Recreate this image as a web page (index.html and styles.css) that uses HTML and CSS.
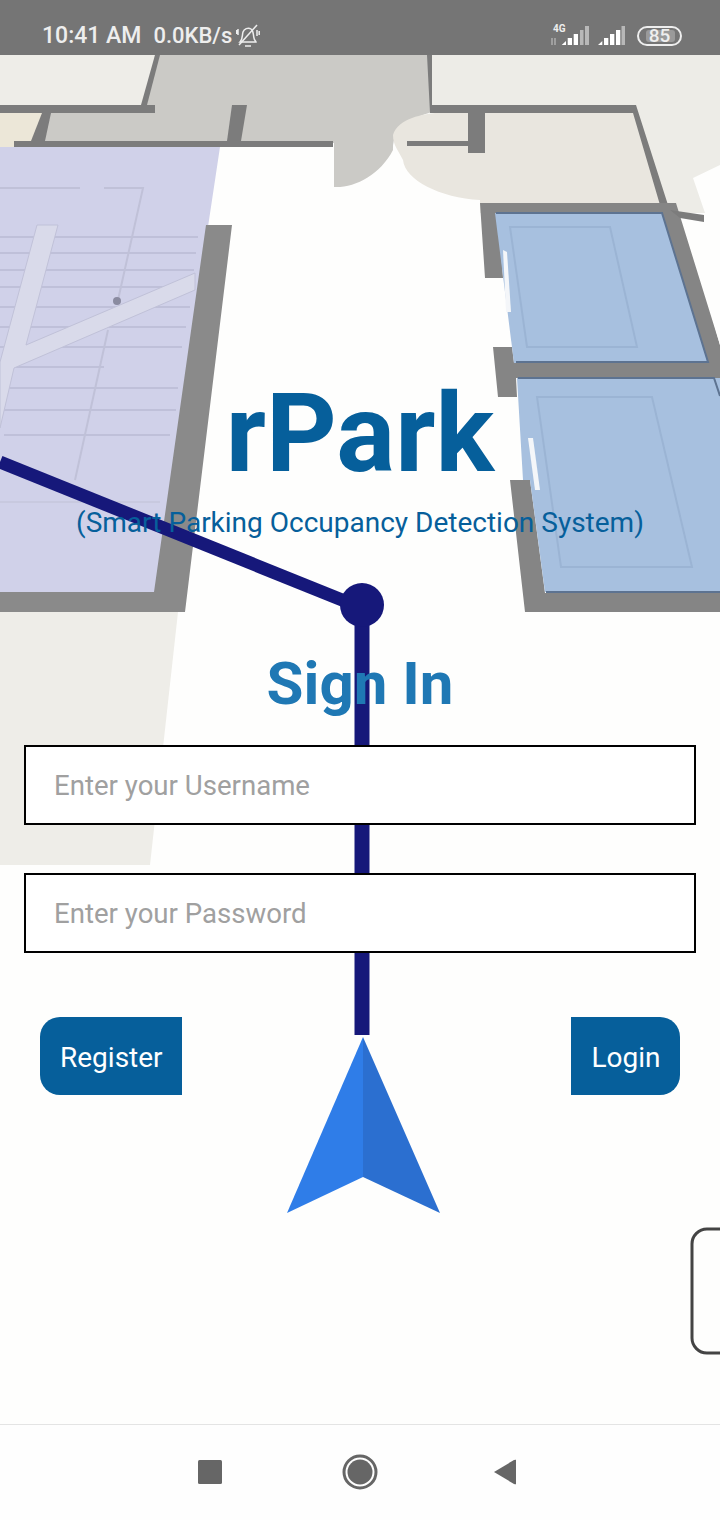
FILE: index.html
```html
<!DOCTYPE html>
<html>
<head>
    <title>rPark</title>
    <meta name="viewport" content="width=device-width, initial-scale=1">
    <link rel="stylesheet" href="styles.css">
</head>
<body>
    <div class="statusbar">
        <span class="time">10:41 AM</span>
        <span class="speed">0.0KB/s</span>
        <svg class="bell" width="24" height="24" viewBox="0 0 24 24" fill="none" stroke="#eee" stroke-width="1.5">
            <path d="M4 18 C7 15 6 11 7 8 C8 5 12 3 15 5 C18 7 17 11 18 14 C18 16 20 17 20 18 Z"/>
            <path d="M9 22 H15"/>
            <path d="M3 21 L21 1"/>
            <path d="M2 5 V11 M0.500 6 V10 M21 6 V12 M23.200 7 V11"/>
        </svg>
        <div class="status-right">
            <svg class="signal-4g" width="40" height="24" viewBox="0 0 40 24">
                <text x="3" y="8" class="net-label">4G</text>
                <path d="M2 14 V21 M5 14 V21" stroke="#bbb" stroke-width="1.200"/>
                <path d="M11.700 21 L16 17 V21 Z M17.700 21 V14 H22 V21 Z M23.700 21 V10 H28 V21 Z" fill="#fff"/>
                <path d="M30 21 V6 H33.500 V21 Z M35 21 V2 H39 V21 Z" fill="#b8b8b8"/>
            </svg>
            <svg class="signal-sim" width="28" height="24" viewBox="0 0 28 24">
                <path d="M0 21 L4.300 17 V21 Z M6 21 V14 H10.300 V21 Z M12 21 V10 H16.300 V21 Z M18 21 V6 H22.300 V21 Z" fill="#fff"/>
                <path d="M23.500 21 V2 H27 V21 Z" fill="#b8b8b8"/>
            </svg>
            <div class="battery"><span class="battery-fill"></span><span class="battery-num">85</span></div>
        </div>
    </div>

    <div class="main">
        <svg class="map" width="720" height="1369" viewBox="0 55 720 1369">
            <!-- floor zones -->
            <path d="M430 55 H720 V165 L693 178 L705 213 H480 V113 H430 Z" fill="#edece7"/>
            <path d="M0 55 H158 L143 105 H0 Z" fill="#eeede8"/>
            <path d="M155 55 H432 V112 C410 118 392 130 393 150 C380 175 355 188 334 187 V143 H40 L50 113 H143 Z" fill="#cbcac6"/>
            <path d="M0 113 H44 L36 143 L0 165 Z" fill="#ece7d8"/>
            <path d="M393 135 C398 118 425 114 435 113 H636 L662 205 H480 V200 C440 198 405 180 403 160 C398 150 393 145 393 135 Z" fill="#e9e6df"/>
            <path d="M0 612 H178 L150 865 H0 Z" fill="#eeede8"/>
            <path d="M0 147 H220 L206 240 L160 592 H0 Z" fill="#d0d1e9"/>

            <!-- stairs -->
            <g stroke="#bfc0d9" stroke-width="2" fill="none">
                <path d="M0 237 H198 M0 253 H196 M0 270 H194 M0 287 H192 M0 307 H190 M0 327 H186 M0 347 H182 M13 367 H104 M0 388 H178 M4 410 H176 M4 435 H170"/>
                <path d="M0 502 H160" stroke="#c8c9df"/>
                <path d="M0 188 H80 M104 188 H143 L118 300" stroke="#c0c1d8"/>
                <path d="M108 330 L75 480" stroke="#c0c1d8"/>
            </g>
            <path d="M37 225 H58 L26 345 L195 273 V290 L14 368 L0 428 V362 Z" fill="#d9daea" stroke="#c0c1d8" stroke-width="1"/>
            <circle cx="117" cy="301" r="4" fill="#8a8ba0"/>

            <!-- walls -->
            <g fill="#7c7c7c">
                <path d="M0 105 H155 V113 H0 Z"/>
                <path d="M155 55 H160 L147 105 H141 Z"/>
                <path d="M42 113 H51 L45 141 H31 Z"/>
                <path d="M232 105 H247 L241 141 H227 Z"/>
                <path d="M14 141 H333 V147 H14 Z"/>
                <path d="M206 225 H232 L185 612 H0 V592 H154 Z" fill="#8a8a8a"/>
                <path d="M427 55 H432 V105 H636 L668 205 H660 L633 113 H485 V153 H468 V146 H407 V141 H468 V113 H430 Z"/>
                <path d="M480 203 H676 L720 345 V378 H516 L517 397 H498 L493 347 H512 L514 363 H706 L660 213 H498 L503 278 H485 Z" fill="#858585"/>
                <path d="M510 480 H530 L545 593 H720 V612 H525 Z" fill="#858585"/>
                <path d="M670 210 L704 215 V222 L680 218 Z"/>
            </g>

            <!-- rooms -->
            <g fill="#a7c0df">
                <path d="M495 213 H662 L708 363 H514 Z"/>
                <path d="M517 378 H720 V592 H545 L530 480 H523 Z"/>
            </g>
            <g fill="none" stroke="#9bb4d4" stroke-width="2">
                <path d="M510 227 H610 L637 347 H527 Z"/>
                <path d="M537 397 H652 L692 567 H561 Z"/>
            </g>
            <g fill="none" stroke="#5d7391" stroke-width="2">
                <path d="M496 213 H662 L708 362 H516"/>
                <path d="M518 378 H714 L720 396"/>
                <path d="M546 592 H720"/>
            </g>
            <path d="M503 250 L507 252 L511 312 L506 312 Z" fill="#f4f6f9"/>
            <path d="M528 438 L533 438 L540 490 L535 490 Z" fill="#f4f6f9"/>
            <path d="M686 222 L708 222 L720 262 V345 Z" fill="#fefefd"/>

            <!-- route -->
            <path d="M0 462 L362 608" stroke="#16187a" stroke-width="13" fill="none"/>
            <path d="M362 605 V1035" stroke="#16187a" stroke-width="15" fill="none"/>
            <circle cx="362" cy="605" r="22" fill="#16187a"/>

            <!-- position arrow -->
            <path d="M363 1037 L287 1213 L363 1177 Z" fill="#2f7de8"/>
            <path d="M363 1037 L440 1213 L363 1177 Z" fill="#2b6fd0"/>

            <rect x="692" y="1229" width="60" height="124" rx="15" fill="none" stroke="#444" stroke-width="3"/>
        </svg>

        <div class="content">
            <h1>rPark</h1>
            <p class="subtitle">(Smart Parking Occupancy Detection System)</p>
            <h2>Sign In</h2>
            <form class="login-form">
                <input type="text" placeholder="Enter your Username">
                <input type="password" placeholder="Enter your Password">
                <div class="buttons">
                    <button type="button" class="btn btn-left">Register</button>
                    <button type="button" class="btn btn-right">Login</button>
                </div>
            </form>
        </div>
    </div>

    <div class="navbar">
        <svg width="24" height="24" viewBox="0 0 24 24"><rect width="24" height="24" rx="1.500" fill="#666"/></svg>
        <svg class="nav-home" width="36" height="36" viewBox="0 0 36 36"><circle cx="18" cy="18" r="16" fill="none" stroke="#666" stroke-width="3"/><circle cx="18" cy="18" r="12.500" fill="#666"/></svg>
        <svg class="nav-back" width="24" height="28" viewBox="0 0 24 28"><path d="M2 14 L22 2 Q25 1 25 3 V25 Q25 27 22 26 Z" fill="#666"/></svg>
    </div>
</body>
</html>
```

FILE: styles.css
```css
html, body {
    margin: 0;
    padding: 0;
}
body {
    width: 720px;
    height: 1520px;
    display: flex;
    flex-direction: column;
    overflow: hidden;
    font-family: Roboto, Arial, sans-serif;
    background-color: #fefefd;
}
.statusbar {
    box-sizing: border-box;
    height: 55px;
    flex: none;
    display: flex;
    align-items: center;
    padding: 16px 38px 0 42px;
    background-color: #757575;
    color: #eee;
    font-size: 23px;
    font-weight: 500;
}
.speed {
    margin-left: 12px;
    font-size: 22px;
}
.bell {
    margin-left: 4px;
}
.status-right {
    margin-left: auto;
    display: flex;
    align-items: center;
}
.net-label {
    font-size: 10px;
    font-weight: 700;
    fill: #eee;
}
.signal-sim {
    margin-left: 8px;
}
.battery {
    position: relative;
    box-sizing: border-box;
    width: 45px;
    height: 20px;
    margin-left: 11px;
    border: 2px solid #eee;
    border-radius: 11px;
    display: flex;
    align-items: center;
    justify-content: center;
    font-size: 19px;
}
.battery-fill {
    position: absolute;
    left: 7px;
    top: 2px;
    bottom: 2px;
    width: 29px;
    border-radius: 3px;
    background-color: #9a9a9a;
}
.battery-num {
    position: relative;
}
.main {
    position: relative;
    flex: 1;
}
.map {
    position: absolute;
    left: 0;
    top: 0;
    filter: blur(0.6px);
}
.content {
    position: relative;
    padding-top: 319px;
    text-align: center;
}
h1 {
    margin: 0;
    font-size: 110px;
    line-height: 120px;
    font-weight: 700;
    color: #065f9b;
}
.subtitle {
    margin: 9px 0 0;
    font-size: 28px;
    line-height: 40px;
    color: #065f9b;
}
h2 {
    margin: 106px 0 0;
    font-size: 60px;
    line-height: 70px;
    font-weight: 700;
    color: #1f78b4;
}
.login-form {
    margin-top: 26px;
    padding: 0 24px;
    display: flex;
    flex-direction: column;
    gap: 48px;
}
input {
    box-sizing: border-box;
    height: 80px;
    width: 100%;
    padding: 0 28px;
    border: 2px solid #000;
    border-radius: 0;
    outline: none;
    background-color: #fff;
    font-family: Roboto, Arial, sans-serif;
    font-size: 27.6px;
}
input::placeholder {
    color: #a0a0a0;
    opacity: 1;
}
.buttons {
    display: flex;
    justify-content: space-between;
    margin: 16px 16px 0;
}
.btn {
    height: 78px;
    padding: 2px 19.5px 0 20px;
    border: none;
    background-color: #065f9b;
    color: white;
    font-family: Roboto, Arial, sans-serif;
    font-size: 28px;
}
.btn-left {
    border-radius: 20px 0 0 20px;
}
.btn-right {
    border-radius: 0 20px 20px 0;
}
.navbar {
    box-sizing: border-box;
    height: 96px;
    flex: none;
    display: flex;
    align-items: center;
    padding: 0 0 2px 198px;
    border-top: 1px solid #e4e4e4;
    background-color: #fefefe;
}
.nav-home {
    margin-left: 120px;
}
.nav-back {
    margin-left: 114px;
}
```
